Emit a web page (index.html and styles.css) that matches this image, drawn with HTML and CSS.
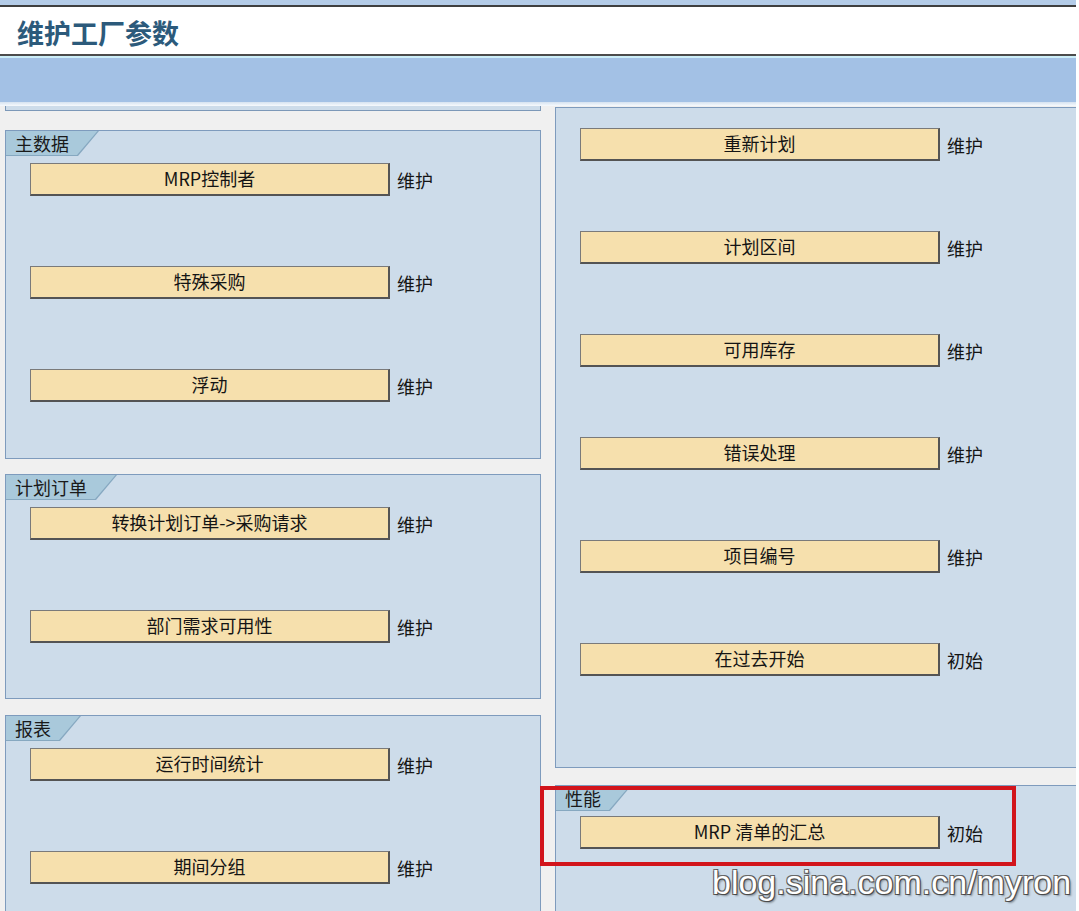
FILE: index.html
```html
<!DOCTYPE html>
<html lang="zh-CN">
<head>
<meta charset="utf-8">
<title>维护工厂参数</title>
<link rel="stylesheet" href="styles.css">
</head>
<body>
<div class="page">
  <div class="topstrip"></div>
  <div class="titlebar"><h1 class="title">维护工厂参数</h1></div>
  <div class="sep"></div>
  <div class="toolbar"></div>
  <div class="sep2"></div>
  <div class="content">
    <div class="col col-left">
      <div class="frag"></div>
      <section class="box box-master">
        <div class="tab"><span>主数据</span></div>
        <div class="rows">
          <div class="row"><div class="btn">MRP控制者</div><span class="lbl">维护</span></div>
          <div class="row"><div class="btn">特殊采购</div><span class="lbl">维护</span></div>
          <div class="row"><div class="btn">浮动</div><span class="lbl">维护</span></div>
        </div>
      </section>
      <section class="box box-order">
        <div class="tab"><span>计划订单</span></div>
        <div class="rows">
          <div class="row"><div class="btn">转换计划订单-&gt;采购请求</div><span class="lbl">维护</span></div>
          <div class="row"><div class="btn">部门需求可用性</div><span class="lbl">维护</span></div>
        </div>
      </section>
      <section class="box box-report">
        <div class="tab"><span>报表</span></div>
        <div class="rows">
          <div class="row"><div class="btn">运行时间统计</div><span class="lbl">维护</span></div>
          <div class="row"><div class="btn">期间分组</div><span class="lbl">维护</span></div>
        </div>
      </section>
    </div>
    <div class="col col-right">
      <section class="box box-plan">
        <div class="rows rows-plan">
          <div class="row"><div class="btn">重新计划</div><span class="lbl">维护</span></div>
          <div class="row"><div class="btn">计划区间</div><span class="lbl">维护</span></div>
          <div class="row"><div class="btn">可用库存</div><span class="lbl">维护</span></div>
          <div class="row"><div class="btn">错误处理</div><span class="lbl">维护</span></div>
          <div class="row"><div class="btn">项目编号</div><span class="lbl">维护</span></div>
          <div class="row"><div class="btn">在过去开始</div><span class="lbl">初始</span></div>
        </div>
      </section>
      <section class="box box-perf">
        <div class="tab"><span>性能</span></div>
        <div class="rows rows-perf">
          <div class="row"><div class="btn">MRP 清单的汇总</div><span class="lbl">初始</span></div>
        </div>
      </section>
    </div>
  </div>
  <div class="highlight"></div>
  <div class="watermark">blog.sina.com.cn/myron</div>
</div>
</body>
</html>
```
FILE: styles.css
```css
* { box-sizing: border-box; }
html, body { margin: 0; padding: 0; }
body {
  background: #ffffff;
  font-family: "Noto Sans CJK SC", "Noto Sans", sans-serif;
  color: #151515;
  width: 1079px;
  height: 911px;
  overflow: hidden;
}
.page {
  position: relative;
  width: 1076px;
  height: 911px;
  overflow: hidden;
  display: flex;
  flex-direction: column;
}
.topstrip {
  height: 7px;
  background: #b4cce8;
  border-bottom: 2px solid #3f3f3f;
  flex: none;
}
.titlebar {
  height: 49px;
  background: #ffffff;
  border-bottom: 2px solid #4c4c4c;
  flex: none;
}
.title {
  margin: 0;
  padding-left: 17px;
  padding-top: 1px;
  font-size: 27px;
  line-height: 49px;
  font-weight: bold;
  color: #2c5a7b;
}
.sep {
  height: 2px;
  background: #cdeef8;
  flex: none;
}
.toolbar {
  height: 44px;
  background: #a3c1e5;
  flex: none;
}
.sep2 {
  height: 4px;
  background: linear-gradient(#d6e3f1, #f7fafd);
  flex: none;
}
.content {
  flex: 1;
  background: #f0f0f0;
  display: flex;
  padding-left: 5px;
  overflow: hidden;
}
.col {
  display: flex;
  flex-direction: column;
}
.col-left {
  width: 536px;
  flex: none;
}
.col-right {
  flex: 1;
  margin-left: 14px;
}
.frag {
  height: 5px;
  border: 1px solid #7c98b8;
  border-top: none;
  background: #cddcea;
  flex: none;
}
.box {
  border: 1px solid #7e9bbd;
  background: #cddcea;
  display: flex;
  flex-direction: column;
  flex: none;
}
.box-master { margin-top: 19px; height: 329px; }
.box-order { margin-top: 15px; height: 225px; }
.box-report { margin-top: 16px; height: 320px; }
.box-plan { margin-top: 1px; height: 661px; border-right: none; }
.box-perf { margin-top: 17px; height: 300px; border-right: none; }

.tab {
  position: relative;
  isolation: isolate;
  align-self: flex-start;
  height: 25px;
  padding: 0 30px 0 9px;
  font-size: 18px;
  line-height: 24px;
  color: #1a1a1a;
}
.tab::before {
  content: "";
  position: absolute;
  inset: 0;
  background: #86a8c0;
  clip-path: polygon(0 0, 100% 0, calc(100% - 21px) 100%, 0 100%);
  z-index: -1;
}
.tab::after {
  content: "";
  position: absolute;
  inset: 0 0 1px 0;
  background: #a9c9db;
  clip-path: polygon(0 0, calc(100% - 1.5px) 0, calc(100% - 22px) 100%, 0 100%);
  z-index: -1;
}
.rows {
  display: flex;
  flex-direction: column;
  gap: 70px;
  padding: 7px 0 0 24px;
}
.rows-plan { padding-top: 20px; }
.rows-perf { padding-top: 5px; }
.row {
  display: flex;
  align-items: center;
}
.btn {
  width: 360px;
  height: 33px;
  background: #f6e0ad;
  border-top: 1px solid #7a7a7a;
  border-left: 1px solid #7a7a7a;
  border-right: 2px solid #545454;
  border-bottom: 2px solid #545454;
  font-size: 18px;
  line-height: 29px;
  text-align: center;
  color: #141414;
}
.lbl {
  margin-left: 7px;
  font-size: 18px;
  color: #141414;
}
.highlight {
  position: absolute;
  left: 540px;
  top: 786px;
  width: 476px;
  height: 80px;
  border: 4px solid #d2141b;
}
.watermark {
  position: absolute;
  left: 712px;
  top: 862px;
  font-family: "Liberation Sans", Arial, sans-serif;
  font-size: 34px;
  line-height: 40px;
  color: #ffffff;
  white-space: nowrap;
  text-shadow: 1px 1px 0 #4a4a4a, -1px -1px 0 #6a6a6a, 1px -1px 0 #5a5a5a, -1px 1px 0 #5a5a5a, 2px 2px 2px rgba(0,0,0,0.35);
}
```
